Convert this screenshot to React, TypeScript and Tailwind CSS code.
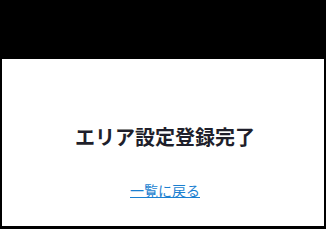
import React from "react";

export default function App() {
  return (
    <div className="w-[326px] h-[229px] bg-black flex flex-col" style={{ fontFamily: '"Noto Sans CJK JP", "Noto Sans", sans-serif' }}>
      <div className="h-[59px] shrink-0" />
      <div className="flex-1 ml-[2px] mr-[2px] mb-[3px] bg-white flex flex-col items-center pt-[64px] pl-[4px]">
        <h1 className="text-[20px] leading-[28px] font-bold text-[#1f1f2b]">エリア設定登録完了</h1>
        <a href="#" className="mt-[29px] text-[14px] leading-[20px] text-[#1a7fd0] underline">一覧に戻る</a>
      </div>
    </div>
  );
}
